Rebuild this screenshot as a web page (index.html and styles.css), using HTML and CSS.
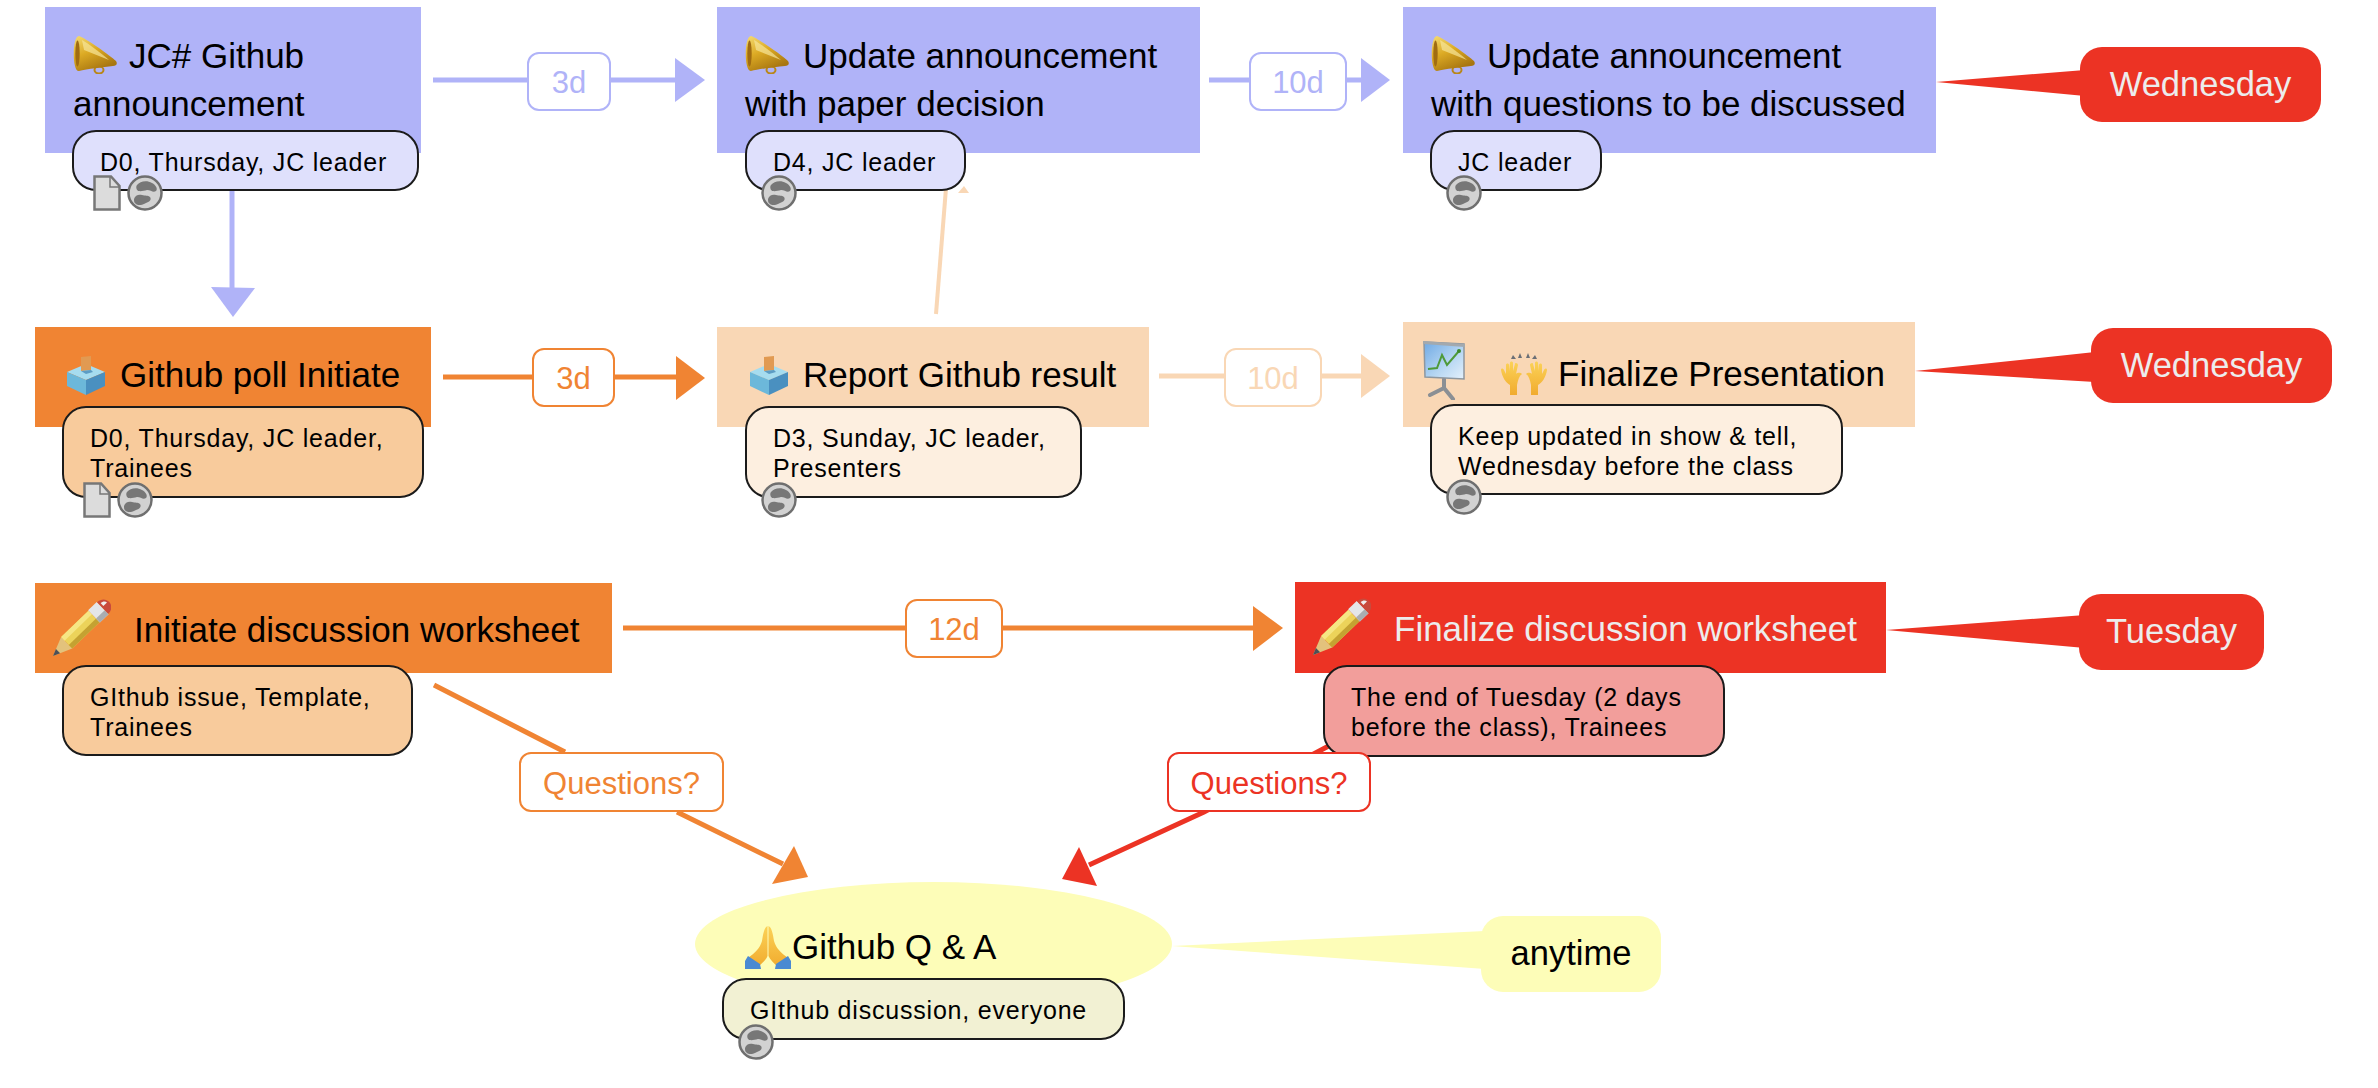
FILE: index.html
```html
<!DOCTYPE html>
<html lang="en">
<head>
    <meta charset="UTF-8">
    <title>Journal Club Workflow</title>
    <link rel="stylesheet" href="styles.css">
</head>
<body>
    <!-- shared icons -->
    <svg class="icon-defs" aria-hidden="true">
        <defs>
            <linearGradient id="goldGrad" x1="0" y1="0" x2="0.5" y2="1">
                <stop offset="0" stop-color="#f5dc74"/>
                <stop offset="0.5" stop-color="#dcaa24"/>
                <stop offset="1" stop-color="#a87610"/>
            </linearGradient>
            <linearGradient id="boardGrad" x1="0" y1="0" x2="1" y2="1">
                <stop offset="0" stop-color="#6fa9e4"/>
                <stop offset="0.6" stop-color="#b9d8f3"/>
                <stop offset="1" stop-color="#e3f0fb"/>
            </linearGradient>
            <linearGradient id="handGrad" x1="0" y1="0" x2="0" y2="1">
                <stop offset="0" stop-color="#fbd257"/>
                <stop offset="1" stop-color="#f1ab2e"/>
            </linearGradient>
        </defs>
        <symbol id="i-megaphone" viewBox="0 0 44 38">
            <ellipse cx="26" cy="34" rx="4.5" ry="3.4" fill="none" stroke="#b98718" stroke-width="2"/>
            <path d="M6 0C11 1 38 20 43 25C45 28 43 30 40 30C30 31 14 33 6 35C-1 36-1 0 6 0Z" fill="url(#goldGrad)"/>
            <ellipse cx="4.500" cy="17.500" rx="2.200" ry="13" fill="#a06c12"/>
            <path d="M9 4C16 8 28 17 36 24L11 14Z" fill="#f7e59a" opacity="0.7"/>
        </symbol>
        <symbol id="i-ballot" viewBox="0 0 40 39">
            <path d="M20 8L39 16L20 24L1 16Z" fill="#a6dcef"/>
            <path d="M1 16L20 24V39L1 30Z" fill="#6cb8da"/>
            <path d="M39 16L20 24V39L39 30Z" fill="#4a90c0"/>
            <path d="M15 1L25 0V14L15 15Z" fill="#e19a52"/>
            <path d="M15 15L25 14L27 16L20 18Z" fill="#5c9cc4"/>
        </symbol>
        <symbol id="i-board" viewBox="0 0 42 59">
            <path d="M21 38V47M21 47L7 54M21 47L30 58" stroke="#8b8f94" stroke-width="4" fill="none" stroke-linecap="round"/>
            <path d="M1 1L41 3V38L2 36Z" fill="url(#boardGrad)" stroke="#8e979f" stroke-width="1.500"/>
            <path d="M0 0L42 3V6L0 3Z" fill="#a3a9ae"/>
            <path d="M5 28L14 27L19 14L24 24L36 10" fill="none" stroke="#4f9a3a" stroke-width="2"/>
            <circle cx="36" cy="10" r="2" fill="#3c8a2c"/>
        </symbol>
        <symbol id="i-hands" viewBox="0 0 46 42">
            <path d="M9 2L12 6H7ZM16 0L18 5H14ZM24 0L26 5H22ZM31 2L33 6H28Z" fill="#6b6f76" transform="translate(3 0)"/>
            <path d="M9 42V32C5 30 1 24 0 17C0 15 2 15 3 17L5 21V12C5 10 8 10 8 12V18L9 10C9 8 12 8 12 10V18L14 11C14 9 17 10 17 12L15 21C17 19 20 20 21 21C18 23 17 27 16 32V42Z" fill="url(#handGrad)"/>
            <path d="M37 42V32C41 30 45 24 46 17C46 15 44 15 43 17L41 21V12C41 10 38 10 38 12V18L37 10C37 8 34 8 34 10V18L32 11C32 9 29 10 29 12L31 21C29 19 26 20 25 21C28 23 29 27 30 32V42Z" fill="url(#handGrad)"/>
        </symbol>
        <symbol id="i-pencil" viewBox="0 0 60 60">
            <g transform="translate(2 58) rotate(-44)">
                <path d="M0 0L19-8V8Z" fill="#e3c27c"/>
                <path d="M0 0L7-3V3Z" fill="#4c5058"/>
                <path d="M19-8H57V8H19Z" fill="#ecd35a"/>
                <path d="M19-8H57V-3H19Z" fill="#f6e684"/>
                <path d="M19 3H57V8H19Z" fill="#c4a232"/>
                <path d="M57-8.500H69V8.500H57Z" fill="#e4e6e8"/>
                <path d="M57 3H69V8.500H57Z" fill="#a9adb1"/>
                <path d="M69-8C75-8 78-4 78 0C78 4 75 8 69 8Z" fill="#c94a3c"/>
                <path d="M71-5C74-5 76-3 76-1L71-1Z" fill="#efefef"/>
            </g>
        </symbol>
        <symbol id="i-pray" viewBox="0 0 46 43">
            <path d="M22.500 0C19.500 1 18 8 17 15C15 22 10 27 3 32L13 41C17 37 21 34 22.500 30Z" fill="url(#handGrad)"/>
            <path d="M23.500 0C26.500 1 28 8 29 15C31 22 36 27 43 32L33 41C29 37 25 34 23.500 30Z" fill="url(#handGrad)"/>
            <path d="M3 30L15 38L16 43H0V35Z" fill="#4a8ad2"/>
            <path d="M43 30L31 38L30 43H46V35Z" fill="#4a8ad2"/>
        </symbol>
        <symbol id="i-doc" viewBox="0 0 28 36">
            <path d="M1.500 1.500H18L26.500 11V34.500H1.500Z" fill="#dcdcdc" stroke="#777" stroke-width="2.500"/>
            <path d="M17 2V12H26" fill="none" stroke="#777" stroke-width="1.500"/>
        </symbol>
        <symbol id="i-link" viewBox="0 0 36 36">
            <circle cx="18" cy="18" r="16.500" fill="#d2d2d2" stroke="#6f6f6f" stroke-width="2.500"/>
            <path d="M10 10C13 6 20 5 25 8C29 10 31 14 29 16C26 18 24 15 20 15C16 16 12 17 10 15C9 13 9 11 10 10Z" fill="#777"/>
            <path d="M7 24C8 20 12 19 15 20C18 21 21 20 23 22C25 25 22 27 19 28C16 30 11 31 9 29C7 28 7 26 7 24Z" fill="#777"/>
        </symbol>
    </svg>

    <div class="canvas">
        <!-- connector lines and callout tails -->
        <svg class="links" width="2378" height="1088" viewBox="0 0 2378 1088">
            <g class="link-purple">
                <path class="line" d="M433 80H676"/>
                <polygon points="675,58 705,80 675,102"/>
                <path class="line" d="M1209 80H1362"/>
                <polygon points="1361,58 1390,80 1361,102"/>
                <path class="line" d="M232 190V288"/>
                <polygon points="211,287 255,288 233,317"/>
            </g>
            <g class="link-orange">
                <path class="line" d="M443 377H677"/>
                <polygon points="676,356 705,378 676,400"/>
                <path class="line" d="M623 628H1254"/>
                <polygon points="1253,606 1283,628 1253,651"/>
                <path class="line" d="M434 685L565 752M677 812L783 864"/>
                <polygon points="794,846 808,877 772,884"/>
            </g>
            <g class="link-peach">
                <path class="line" d="M1159 376H1362"/>
                <polygon points="1361,354 1390,376 1361,398"/>
                <path class="line thin" d="M936 314L946 188"/>
                <polygon points="958,193 969,193 964,186"/>
            </g>
            <g class="link-red">
                <path class="line" d="M1340 740L1204 812L1089 865"/>
                <polygon points="1079,847 1097,886 1062,879"/>
                <polygon points="1936,82 2085,70 2085,96"/>
                <polygon points="1915,371 2095,352 2095,382"/>
                <polygon points="1886,630 2085,615 2085,648"/>
            </g>
            <polygon class="tail-yellow" points="1172,946 1485,931 1485,969"/>
        </svg>

        <!-- row 1 -->
        <div class="topic topic-purple pos-announce"><div class="title"><svg class="emoji emoji-mega"><use href="#i-megaphone"/></svg>JC# Github<br>announcement</div></div>
        <div class="note note-purple pos-announce-note">D0, Thursday, JC leader
            <div class="note-icons icons-double"><svg class="ic-doc"><use href="#i-doc"/></svg><svg class="ic-link"><use href="#i-link"/></svg></div>
        </div>

        <div class="topic topic-purple pos-decision"><div class="title"><svg class="emoji emoji-mega emoji-mega-wide"><use href="#i-megaphone"/></svg>Update announcement<br>with paper decision</div></div>
        <div class="note note-purple pos-decision-note">D4, JC leader
            <div class="note-icons"><svg class="ic-link"><use href="#i-link"/></svg></div>
        </div>

        <div class="topic topic-purple pos-questions"><div class="title"><svg class="emoji emoji-mega"><use href="#i-megaphone"/></svg>Update announcement<br>with questions to be discussed</div></div>
        <div class="note note-purple pos-questions-note">JC leader
            <div class="note-icons"><svg class="ic-link"><use href="#i-link"/></svg></div>
        </div>

        <!-- row 2 -->
        <div class="topic topic-orange pos-poll"><div class="title single"><svg class="emoji emoji-ballot"><use href="#i-ballot"/></svg>Github poll Initiate</div></div>
        <div class="note note-orange pos-poll-note">D0, Thursday, JC leader,<br>Trainees
            <div class="note-icons icons-double"><svg class="ic-doc"><use href="#i-doc"/></svg><svg class="ic-link"><use href="#i-link"/></svg></div>
        </div>

        <div class="topic topic-peach pos-report"><div class="title single"><svg class="emoji emoji-ballot"><use href="#i-ballot"/></svg>Report Github result</div></div>
        <div class="note note-peach pos-report-note">D3, Sunday, JC leader,<br>Presenters
            <div class="note-icons"><svg class="ic-link"><use href="#i-link"/></svg></div>
        </div>

        <div class="topic topic-peach pos-present"><div class="title single"><svg class="emoji emoji-board"><use href="#i-board"/></svg><svg class="emoji emoji-hands"><use href="#i-hands"/></svg>Finalize Presentation</div></div>
        <div class="note note-peach pos-present-note">Keep updated in show &amp; tell,<br>Wednesday before the class
            <div class="note-icons"><svg class="ic-link"><use href="#i-link"/></svg></div>
        </div>

        <!-- row 3 -->
        <div class="topic topic-orange pos-initiate"><div class="title single"><svg class="emoji emoji-pencil"><use href="#i-pencil"/></svg>Initiate discussion worksheet</div></div>
        <div class="note note-orange pos-initiate-note">GIthub issue, Template,<br>Trainees</div>

        <div class="topic topic-red pos-finalize"><div class="title single"><svg class="emoji emoji-pencil"><use href="#i-pencil"/></svg>Finalize discussion worksheet</div></div>
        <div class="note note-red pos-finalize-note">The end of Tuesday (2 days<br>before the class), Trainees</div>

        <!-- Q and A -->
        <div class="topic topic-yellow pos-qa"><div class="title single"><svg class="emoji emoji-pray"><use href="#i-pray"/></svg>Github Q &amp; A</div></div>
        <div class="note note-yellow pos-qa-note">GIthub discussion, everyone
            <div class="note-icons"><svg class="ic-link"><use href="#i-link"/></svg></div>
        </div>

        <!-- duration labels -->
        <div class="label label-purple pos-l1">3d</div>
        <div class="label label-purple pos-l2">10d</div>
        <div class="label label-orange pos-l3">3d</div>
        <div class="label label-peach pos-l4">10d</div>
        <div class="label label-orange pos-l5">12d</div>
        <div class="label label-orange pos-l6">Questions?</div>
        <div class="label label-red pos-l7">Questions?</div>

        <!-- callouts -->
        <div class="callout callout-red pos-c1">Wednesday</div>
        <div class="callout callout-red pos-c2">Wednesday</div>
        <div class="callout callout-red pos-c3">Tuesday</div>
        <div class="callout callout-yellow pos-c4">anytime</div>
    </div>
</body>
</html>
```

FILE: styles.css
```css
body {
    margin: 0;
    background-color: #fff;
    font-family: "Liberation Sans", Arial, sans-serif;
}

.icon-defs {
    position: absolute;
    width: 0;
    height: 0;
}

.canvas {
    position: relative;
    width: 2378px;
    height: 1088px;
    overflow: hidden;
}

.links {
    position: absolute;
    left: 0;
    top: 0;
}

.line {
    fill: none;
    stroke-width: 5;
}

.line.thin {
    stroke-width: 4;
}

.link-purple { fill: #b0b3f8; stroke: none; }
.link-purple .line { stroke: #b0b3f8; }
.link-orange { fill: #f08433; }
.link-orange .line { stroke: #f08433; }
.link-peach { fill: #f9d7b5; }
.link-peach .line { stroke: #f9d7b5; }
.link-red { fill: #ec3324; }
.link-red .line { stroke: #ec3324; }
.tail-yellow { fill: #fdfdb8; }

/* topics */
.topic {
    position: absolute;
    box-sizing: border-box;
}

.title {
    font-size: 35px;
    line-height: 48px;
    white-space: nowrap;
    color: #000;
}

.title.single {
    display: flex;
    align-items: center;
}

.topic-purple { background-color: #b0b3f8; }
.topic-orange { background-color: #f08433; }
.topic-peach { background-color: #f9d7b5; }
.topic-red { background-color: #ec3324; }
.topic-red .title { color: #ececec; }
.topic-yellow { background-color: #fdfdb8; border-radius: 50%; }

.emoji {
    display: inline-block;
    flex: none;
}

.emoji-mega {
    width: 44px;
    height: 38px;
    margin-right: 12px;
    vertical-align: -6px;
}

.emoji-mega-wide {
    margin-right: 14px;
}

.emoji-ballot {
    width: 40px;
    height: 39px;
    margin-right: 14px;
}

.emoji-board {
    width: 42px;
    height: 59px;
    margin-right: 36px;
    margin-top: -6px;
}

.emoji-hands {
    width: 46px;
    height: 42px;
    margin-right: 11px;
}

.emoji-pencil {
    width: 60px;
    height: 60px;
    margin-right: 23px;
    margin-bottom: 4px;
}

.emoji-pray {
    width: 46px;
    height: 43px;
    margin-right: 1px;
}

.pos-announce { left: 45px; top: 7px; width: 376px; height: 146px; padding: 25px 0 0 28px; }
.pos-decision { left: 717px; top: 7px; width: 483px; height: 146px; padding: 25px 0 0 28px; }
.pos-questions { left: 1403px; top: 7px; width: 533px; height: 146px; padding: 25px 0 0 28px; }
.pos-poll { left: 35px; top: 327px; width: 396px; height: 100px; padding: 24px 0 0 31px; }
.pos-report { left: 717px; top: 327px; width: 432px; height: 100px; padding: 24px 0 0 32px; }
.pos-present { left: 1403px; top: 322px; width: 512px; height: 105px; padding: 25px 0 0 20px; }
.pos-initiate { left: 35px; top: 583px; width: 577px; height: 90px; padding: 15px 0 0 16px; }
.pos-finalize { left: 1295px; top: 582px; width: 591px; height: 91px; padding: 15px 0 0 16px; }
.pos-qa { left: 695px; top: 882px; width: 477px; height: 124px; padding: 41px 0 0 50px; }

/* notes */
.note {
    position: absolute;
    display: flex;
    align-items: center;
    box-sizing: border-box;
    padding: 2px 0 0 26px;
    border: 2px solid #1b1b1b;
    border-radius: 24px;
    font-size: 25px;
    line-height: 30px;
    letter-spacing: 0.8px;
    white-space: pre-line;
    color: #000;
}

.note-purple { background-color: #dfe0fc; }
.note-orange { background-color: #f8cb9c; }
.note-peach { background-color: #fdefe0; }
.note-red { background-color: #f29e9b; }
.note-yellow { background-color: #f2f1d3; }

.note-icons {
    position: absolute;
    left: 14px;
    bottom: -22px;
    display: flex;
    align-items: center;
}

.icons-double {
    left: 19px;
}

.ic-doc {
    width: 28px;
    height: 36px;
    margin-right: 6px;
}

.ic-link {
    width: 36px;
    height: 36px;
}

.pos-announce-note { left: 72px; top: 130px; width: 347px; height: 61px; }
.pos-decision-note { left: 745px; top: 130px; width: 221px; height: 61px; }
.pos-questions-note { left: 1430px; top: 130px; width: 172px; height: 61px; }
.pos-poll-note { left: 62px; top: 406px; width: 362px; height: 92px; }
.pos-report-note { left: 745px; top: 406px; width: 337px; height: 92px; }
.pos-present-note { left: 1430px; top: 404px; width: 413px; height: 91px; }
.pos-initiate-note { left: 62px; top: 665px; width: 351px; height: 91px; }
.pos-finalize-note { left: 1323px; top: 665px; width: 402px; height: 92px; }
.pos-qa-note { left: 722px; top: 978px; width: 403px; height: 62px; }

/* duration labels */
.label {
    position: absolute;
    display: flex;
    align-items: center;
    justify-content: center;
    box-sizing: border-box;
    padding-top: 3px;
    border: 2.5px solid;
    border-radius: 12px;
    background-color: #fff;
    font-size: 31px;
    white-space: nowrap;
}

.label-purple { color: #b0b3f8; border-color: #b0b3f8; }
.label-orange { color: #f08433; border-color: #f08433; }
.label-peach { color: #f9d7b5; border-color: #f9d7b5; }
.label-red { color: #ec3324; border-color: #ec3324; }

.pos-l1 { left: 527px; top: 52px; width: 84px; height: 59px; }
.pos-l2 { left: 1249px; top: 52px; width: 98px; height: 59px; }
.pos-l3 { left: 532px; top: 348px; width: 83px; height: 59px; }
.pos-l4 { left: 1224px; top: 348px; width: 98px; height: 59px; }
.pos-l5 { left: 905px; top: 599px; width: 98px; height: 59px; }
.pos-l6 { left: 519px; top: 752px; width: 205px; height: 60px; }
.pos-l7 { left: 1167px; top: 752px; width: 204px; height: 60px; }

/* callouts */
.callout {
    position: absolute;
    display: flex;
    align-items: center;
    justify-content: center;
    box-sizing: border-box;
    padding-bottom: 1px;
    border-radius: 22px;
    font-size: 34.5px;
    white-space: nowrap;
}

.callout-red { background-color: #ec3324; color: #ececec; }
.callout-yellow { background-color: #fdfdb8; color: #000; }

.pos-c1 { left: 2080px; top: 47px; width: 241px; height: 75px; }
.pos-c2 { left: 2091px; top: 328px; width: 241px; height: 75px; }
.pos-c3 { left: 2079px; top: 594px; width: 185px; height: 76px; }
.pos-c4 { left: 1481px; top: 916px; width: 180px; height: 76px; }
```
